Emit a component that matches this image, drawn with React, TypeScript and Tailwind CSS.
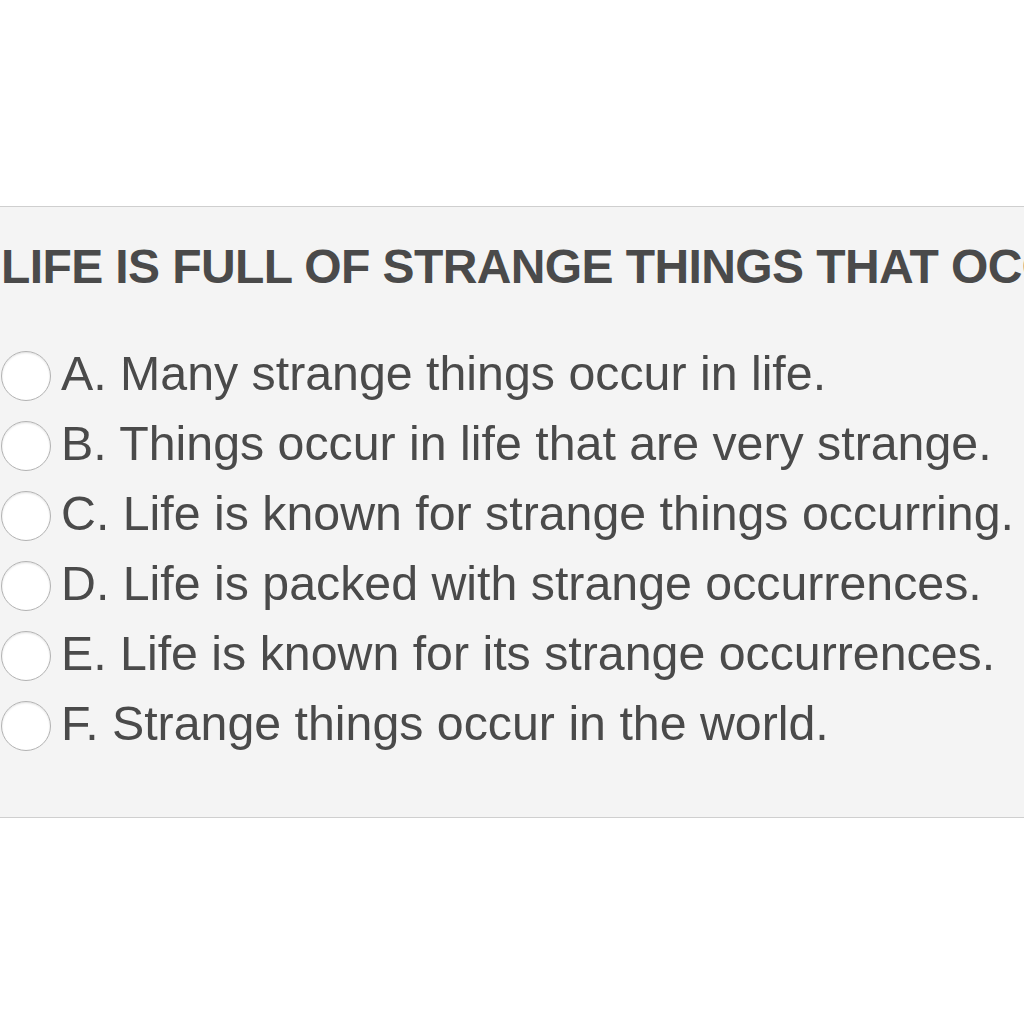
const options = [
  "A. Many strange things occur in life.",
  "B. Things occur in life that are very strange.",
  "C. Life is known for strange things occurring.",
  "D. Life is packed with strange occurrences.",
  "E. Life is known for its strange occurrences.",
  "F. Strange things occur in the world.",
];

export default function App() {
  return (
    <div className="min-h-screen w-full overflow-hidden bg-white pt-[206px] font-['Liberation_Sans',Arial,sans-serif] text-[#4a4a4a]">
      <div className="w-full border-y border-[#cfcfcf] bg-[#f4f4f4] pb-[59px] pl-[1px] pt-[36px]">
        <h2 className="whitespace-nowrap text-[48px] font-bold leading-[48px] tracking-[-0.6px]">
          LIFE IS FULL OF STRANGE THINGS THAT OCCUR IN THE WORLD
        </h2>
        <div className="mt-[47px] flex flex-col">
          {options.map((o) => (
            <label key={o} className="flex h-[70px] items-center gap-[10px] whitespace-nowrap">
              <span className="mt-[5px] block h-[50px] w-[50px] shrink-0 rounded-full border-[1.5px] border-[#b3b3b3] bg-white shadow-[inset_0_1px_2px_rgba(0,0,0,0.12)]" />
              <span className="text-[48.3px] leading-[70px]">{o}</span>
            </label>
          ))}
        </div>
      </div>
    </div>
  );
}
